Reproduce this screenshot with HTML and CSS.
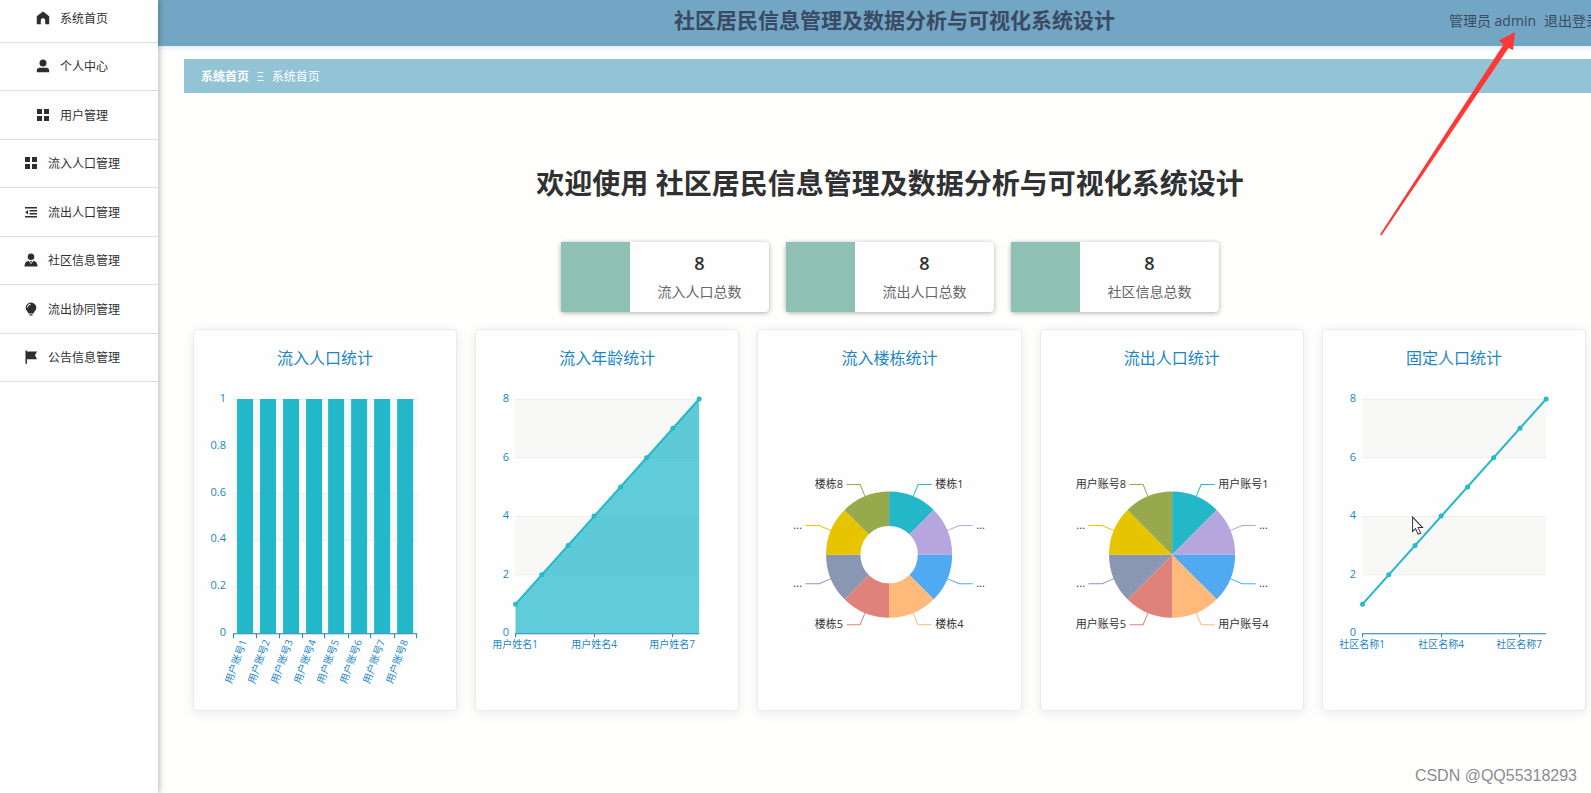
FILE: index.html
```html
<!DOCTYPE html>
<html lang="zh-CN">
<head>
<meta charset="utf-8">
<title>社区居民信息管理及数据分析与可视化系统设计</title>
<link rel="stylesheet" href="styles.css">
</head>
<body>
<div class="shell">
  <nav class="sidebar">
    <ul class="menu">
      <li><a href="#"><svg class="icon" viewBox="0 0 14 14"><path d="M7 .5.800 5.300V13.200h4V9.500a2.200 2.200 0 0 1 4.400 0V13.200h4V5.300z"/></svg>系统首页</a></li>
      <li><a href="#"><svg class="icon" viewBox="0 0 14 14"><circle cx="7" cy="4" r="3.500"/><path d="M.8 13.300v-1.800A3 3 0 0 1 3.800 8.700h6.400a3 3 0 0 1 3 2.800V13.300z"/></svg>个人中心</a></li>
      <li><a href="#"><svg class="icon" viewBox="0 0 14 14"><path d="M1 1h5v5H1zM8 1h5v5H8zM1 8h5v5H1zM8 8h5v5H8z"/></svg>用户管理</a></li>
      <li><a href="#"><svg class="icon" viewBox="0 0 14 14"><path d="M1 1h5v5H1zM8 1h5v5H8zM1 8h5v5H1zM8 8h5v5H8z"/></svg>流入人口管理</a></li>
      <li><a href="#"><svg class="icon" viewBox="0 0 14 14"><path d="M1 2h12v1.500H1zM5.500 5h7.500v1.500H5.500zM5.500 8h7.500v1.500H5.500zM1 11h12v1.500H1zM4 5v4.500L1.200 7.200z"/></svg>流出人口管理</a></li>
      <li><a href="#"><svg class="icon" viewBox="0 0 14 14"><circle cx="7" cy="3.800" r="3.300"/><path d="M.5 13.500c0-3.500 1.500-5 4-5.700L7 11l2.500-3.200c2.500.7 4 2.200 4 5.700zM6 8h2l-.4 1.500h-1.200z"/></svg>社区信息管理</a></li>
      <li><a href="#"><svg class="icon" viewBox="0 0 14 14"><path fill-rule="evenodd" d="M7 .5a5.300 5.300 0 0 1 5.300 5.300c0 2.700-2 3.700-2.800 5.700h-5C3.700 9.500 1.700 8.500 1.700 5.800A5.300 5.300 0 0 1 7 .5zM3 5.500h1C4.200 3.800 5.200 3 6.600 2.800v-1C4.600 2 3.200 3.300 3 5.500zM5.500 12.300h3v1.200h-3z"/></svg>流出协同管理</a></li>
      <li><a href="#"><svg class="icon" viewBox="0 0 14 14"><path d="M1.500.5H3V1.500h10l-2 3.800L13 9.200H3v4.500H1.500z"/></svg>公告信息管理</a></li>
    </ul>
  </nav>

  <div class="page">
    <header class="topbar">
      <h1 class="brand">社区居民信息管理及数据分析与可视化系统设计</h1>
      <div class="account"><span>管理员 admin</span><a href="#">退出登录</a></div>
    </header>

    <main class="content">
      <div class="crumbs"><a href="#">系统首页</a><span>Ξ</span><span>系统首页</span></div>
      <h2 class="welcome">欢迎使用 社区居民信息管理及数据分析与可视化系统设计</h2>

      <section class="stats">
        <div class="stat"><div class="swatch"></div><div class="figure"><strong>8</strong><span>流入人口总数</span></div></div>
        <div class="stat"><div class="swatch"></div><div class="figure"><strong>8</strong><span>流出人口总数</span></div></div>
        <div class="stat"><div class="swatch"></div><div class="figure"><strong>8</strong><span>社区信息总数</span></div></div>
      </section>

      <section class="charts">
        <article class="card">
          <h3>流入人口统计</h3>
          <svg class="chart" viewBox="0 0 262 325">
            <path class="band" d="M39 14h184v47H39zM39 108h184v47H39zM39 202h184v46H39z"/>
            <path class="grid" d="M39 14.500h184M39 61.500h184M39 108.500h184M39 155.500h184M39 201.500h184"/>
            <path class="bar" d="M43 14h16v234H43zM66 14h16v234H66zM89 14h16v234H89zM112 14h16v234H112zM134 14h16v234H134zM157 14h16v234H157zM180 14h16v234H180zM203 14h16v234H203z"/>
            <path class="axis" d="M39 248.500h184M39.500 248v5M62.500 248v5M85.500 248v5M108.500 248v5M130.500 248v5M154.500 248v5M176.500 248v5M200.500 248v5M222.500 248v5"/>
            <g class="ylabel"><text x="32" y="17">1</text><text x="32" y="64">0.8</text><text x="32" y="111">0.6</text><text x="32" y="157">0.4</text><text x="32" y="204">0.2</text><text x="32" y="251">0</text></g>
            <g class="xlabel slanted">
              <text transform="translate(53 256) rotate(-70)">用户账号1</text>
              <text transform="translate(76 256) rotate(-70)">用户账号2</text>
              <text transform="translate(99 256) rotate(-70)">用户账号3</text>
              <text transform="translate(122 256) rotate(-70)">用户账号4</text>
              <text transform="translate(145 256) rotate(-70)">用户账号5</text>
              <text transform="translate(168 256) rotate(-70)">用户账号6</text>
              <text transform="translate(191 256) rotate(-70)">用户账号7</text>
              <text transform="translate(214 256) rotate(-70)">用户账号8</text>
            </g>
          </svg>
        </article>

        <article class="card">
          <h3>流入年龄统计</h3>
          <svg class="chart" viewBox="0 0 262 325">
            <path class="band" d="M39 14h184v58H39zM39 131h184v58H39z"/>
            <path class="grid" d="M39 14.500h184M39 72.500h184M39 131.500h184M39 189.500h184"/>
            <path class="area" d="M39.500 219 223 14V248H39.500z"/>
            <path class="axis" d="M39 248.500h184M39.500 248v4M118.500 248v4M196.500 248v4"/>
            <path class="line" d="M39.500 219 223 14"/>
            <g class="dots"><circle cx="39.500" cy="219" r="1.500"/><circle cx="65.700" cy="189.700" r="1.500"/><circle cx="92" cy="160.400" r="1.500"/><circle cx="118" cy="131" r="1.500"/><circle cx="144.500" cy="102" r="1.500"/><circle cx="170.500" cy="72.600" r="1.500"/><circle cx="196.800" cy="43.300" r="1.500"/><circle cx="223" cy="14" r="1.500"/></g>
            <g class="ylabel"><text x="33" y="17">8</text><text x="33" y="76">6</text><text x="33" y="134">4</text><text x="33" y="193">2</text><text x="33" y="251">0</text></g>
            <g class="xlabel"><text x="39" y="263">用户姓名1</text><text x="118" y="263">用户姓名4</text><text x="196" y="263">用户姓名7</text></g>
          </svg>
        </article>

        <article class="card">
          <h3>流入楼栋统计</h3>
          <svg class="chart" viewBox="0 0 262 325">
            <g transform="translate(131 169.500)">
              <defs>
                <path id="ring" d="M0-63A63 63 0 0 1 44.550-44.550L20.300-20.300A28.700 28.700 0 0 0 0-28.700z"/>
                <path id="wedge" d="M0-63A63 63 0 0 1 44.550-44.550L0 0z"/>
                <g id="leaders" fill="none">
                  <path stroke="#22b8ca" d="M24-58 29-70H42.500"/><path stroke="#b6a6de" d="M58-24 70-29H83.500"/>
                  <path stroke="#50aaf1" d="M58 24 70 29H83.500"/><path stroke="#feb97b" d="M24 58 29 70H42.500"/>
                  <path stroke="#df827b" d="M-24 58-29 70H-42.500"/><path stroke="#8a97b2" d="M-58 24-70 29H-83.500"/>
                  <path stroke="#e6c400" d="M-58-24-70-29H-83.500"/><path stroke="#96aa4d" d="M-24-58-29-70H-42.500"/>
                </g>
              </defs>
              <use href="#leaders"/>
              <use href="#ring" fill="#22b8ca"/><use href="#ring" fill="#b6a6de" transform="rotate(45)"/><use href="#ring" fill="#50aaf1" transform="rotate(90)"/><use href="#ring" fill="#feb97b" transform="rotate(135)"/><use href="#ring" fill="#df827b" transform="rotate(180)"/><use href="#ring" fill="#8a97b2" transform="rotate(225)"/><use href="#ring" fill="#e6c400" transform="rotate(270)"/><use href="#ring" fill="#96aa4d" transform="rotate(315)"/>
              <g class="pielabel"><text x="46" y="-67">楼栋1</text><text x="87" y="-26">...</text><text x="87" y="32">...</text><text x="46" y="73">楼栋4</text></g>
              <g class="pielabel left"><text x="-46" y="73">楼栋5</text><text x="-87" y="32">...</text><text x="-87" y="-26">...</text><text x="-46" y="-67">楼栋8</text></g>
            </g>
          </svg>
        </article>

        <article class="card">
          <h3>流出人口统计</h3>
          <svg class="chart" viewBox="0 0 262 325">
            <g transform="translate(131 169.500)">
              <use href="#leaders"/>
              <use href="#wedge" fill="#22b8ca"/><use href="#wedge" fill="#b6a6de" transform="rotate(45)"/><use href="#wedge" fill="#50aaf1" transform="rotate(90)"/><use href="#wedge" fill="#feb97b" transform="rotate(135)"/><use href="#wedge" fill="#df827b" transform="rotate(180)"/><use href="#wedge" fill="#8a97b2" transform="rotate(225)"/><use href="#wedge" fill="#e6c400" transform="rotate(270)"/><use href="#wedge" fill="#96aa4d" transform="rotate(315)"/>
              <g class="pielabel"><text x="46" y="-67">用户账号1</text><text x="87" y="-26">...</text><text x="87" y="32">...</text><text x="46" y="73">用户账号4</text></g>
              <g class="pielabel left"><text x="-46" y="73">用户账号5</text><text x="-87" y="32">...</text><text x="-87" y="-26">...</text><text x="-46" y="-67">用户账号8</text></g>
            </g>
          </svg>
        </article>

        <article class="card">
          <h3>固定人口统计</h3>
          <svg class="chart" viewBox="0 0 262 325">
            <path class="band" d="M39 14h184v58H39zM39 131h184v58H39z"/>
            <path class="grid" d="M39 14.500h184M39 72.500h184M39 131.500h184M39 189.500h184"/>
            <path class="axis" d="M39 248.500h184M39.500 248v4M118.500 248v4M196.500 248v4"/>
            <path class="line" d="M39.500 219 223 14"/>
            <g class="dots"><circle cx="39.500" cy="219" r="1.500"/><circle cx="65.700" cy="189.700" r="1.500"/><circle cx="92" cy="160.400" r="1.500"/><circle cx="118" cy="131" r="1.500"/><circle cx="144.500" cy="102" r="1.500"/><circle cx="170.500" cy="72.600" r="1.500"/><circle cx="196.800" cy="43.300" r="1.500"/><circle cx="223" cy="14" r="1.500"/></g>
            <g class="ylabel"><text x="33" y="17">8</text><text x="33" y="76">6</text><text x="33" y="134">4</text><text x="33" y="193">2</text><text x="33" y="251">0</text></g>
            <g class="xlabel"><text x="39" y="263">社区名称1</text><text x="118" y="263">社区名称4</text><text x="196" y="263">社区名称7</text></g>
            <path class="cursor" d="M89.500 132v14.500l3-3 2.500 5.500 2.500-1-2.500-5.500h4.500z"/>
          </svg>
        </article>
      </section>
    </main>
  </div>
</div>

<svg class="arrow" viewBox="0 0 136 204"><path d="M135 0 133 18 128.500 16 1.500 203.500 0 202.500 123.500 12.500 119 8.500z"/></svg>
<div class="watermark">CSDN @QQ55318293</div>
</body>
</html>
```
FILE: styles.css
```css
* { box-sizing: border-box; }

body {
  position: relative;
  min-height: 100vh;
  margin: 0;
  overflow: hidden;
  background: #fefefd;
  color: #303133;
  font-family: "Open Sans", "Noto Sans CJK SC", sans-serif;
  font-size: 14px;
}

a { color: inherit; text-decoration: none; }
h1, h2, h3, ul { margin: 0; padding: 0; }

/* The shell runs a little past the right edge of the window. */
.shell {
  display: flex;
  width: calc(100% + 40px);
  min-height: 100vh;
}

.sidebar {
  z-index: 1;
  flex: none;
  width: 158px;
  background: #fefefe;
  box-shadow: 1px 0 6px rgba(0, 0, 0, 0.3);
}
.menu {
  display: grid;
  grid-template-rows: repeat(8, 1fr);
  height: 388px;
  margin-top: -6px;
  list-style: none;
}
.menu li { border-bottom: 1px solid #dcdcdc; }
.menu a {
  display: flex;
  align-items: center;
  justify-content: center;
  gap: 10px;
  height: 100%;
  padding-right: 14px;
  font-size: 12px;
}
.icon { width: 14px; height: 14px; fill: #2b2f33; }

.page { flex: 1; min-width: 0; }

.topbar {
  display: grid;
  grid-template-columns: 1fr auto 1fr;
  align-items: center;
  height: 46px;
  padding: 0 31px 7px;
  background: #73a6c4;
  box-shadow: 0 1px 6px rgba(115, 166, 220, 0.3);
  color: #3a4a63;
}
.brand { grid-column: 2; font-size: 21px; line-height: 28px; }
.account { display: flex; justify-content: flex-end; gap: 8px; white-space: nowrap; }

.content { padding: 13px 35px 0 26px; }

.crumbs {
  display: flex;
  align-items: center;
  gap: 8px;
  height: 34px;
  margin-right: -35px;
  padding: 0 17px;
  background: #93c4d6;
  color: #fff;
  font-size: 12px;
}
.crumbs a { font-weight: 700; }

.welcome {
  margin: 70px 0 39px;
  font-size: 28px;
  line-height: 40px;
  text-align: center;
}

.stats { display: flex; justify-content: center; gap: 17px; }
.stat {
  display: flex;
  width: 208px;
  height: 70px;
  border-radius: 4px;
  background: #fefefe;
  box-shadow: 0 1px 5px rgba(0, 0, 0, 0.32);
}
.swatch { width: 69px; background: #8ec1b3; }
.figure {
  display: flex;
  flex: 1;
  flex-direction: column;
  align-items: center;
  gap: 6px;
  padding-top: 8px;
}
.figure strong { font-size: 18px; font-weight: 600; line-height: 26px; }
.figure span { color: #666; line-height: 20px; }

.charts {
  display: grid;
  grid-template-columns: repeat(5, 1fr);
  gap: 18px;
  padding: 17px 10px 0 9px;
}
.card {
  border: 1px solid #e8eaf4;
  border-radius: 4px;
  background: #fefefe;
  box-shadow: 0 2px 12px rgba(0, 0, 0, 0.08);
}
.card h3 {
  padding: 18px 0 17px;
  color: #1b86c3;
  font-size: 16px;
  font-weight: 400;
  line-height: 20px;
  text-align: center;
}

.chart { display: block; width: 100%; }
.band { fill: #f8f8f7; }
.grid { stroke: #eee; }
.bar { fill: #22b8ca; }
.area { fill: #22b8ca; fill-opacity: 0.72; }
.axis { fill: none; stroke: #1b80b8; }
.line { stroke: #22b8ca; stroke-width: 2; }
.dots { fill: #6fd2de; stroke: #22b8ca; stroke-width: 2; }
.ylabel { fill: #1b86c3; font-size: 11px; text-anchor: end; }
.xlabel { fill: #1b86c3; font-size: 10px; text-anchor: middle; }
.slanted { text-anchor: end; }
.pielabel { fill: #333; font-size: 11px; }
.left { text-anchor: end; }
.cursor { fill: #fff; stroke: #333; }

.arrow {
  position: absolute;
  z-index: 2;
  top: 32px;
  right: 75px;
  width: 136px;
  fill: #fd3836;
}
.watermark {
  position: absolute;
  right: 14px;
  bottom: 7px;
  color: #8c8c8c;
  font-family: "Liberation Sans", sans-serif;
  font-size: 16px;
  line-height: 20px;
  text-shadow: 1px 1px 1px #fff;
}
```
